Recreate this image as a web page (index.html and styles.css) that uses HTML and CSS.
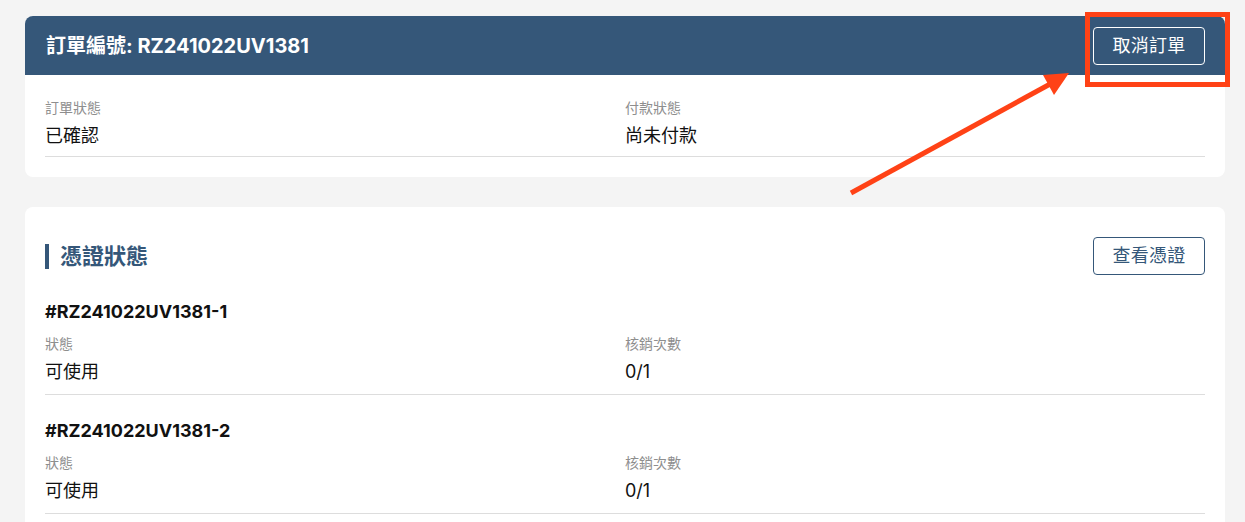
FILE: index.html
```html
<!DOCTYPE html>
<html lang="zh-Hant">
<head>
<meta charset="utf-8">
<title>訂單</title>
<link rel="stylesheet" href="styles.css">
</head>
<body>
<div class="page">
  <section class="card order-card">
    <header class="order-head">
      <h1 class="order-title">訂單編號: RZ241022UV1381</h1>
      <button class="btn btn-light">取消訂單</button>
    </header>
    <div class="order-body">
      <div class="fields">
        <div class="field">
          <div class="label">訂單狀態</div>
          <div class="value">已確認</div>
        </div>
        <div class="field">
          <div class="label">付款狀態</div>
          <div class="value">尚未付款</div>
        </div>
      </div>
    </div>
  </section>

  <section class="card voucher-card">
    <div class="section-head">
      <h2 class="section-title">憑證狀態</h2>
      <button class="btn btn-outline">查看憑證</button>
    </div>

    <div class="voucher">
      <div class="voucher-id">#RZ241022UV1381-1</div>
      <div class="fields">
        <div class="field">
          <div class="label">狀態</div>
          <div class="value">可使用</div>
        </div>
        <div class="field">
          <div class="label">核銷次數</div>
          <div class="value">0/1</div>
        </div>
      </div>
    </div>

    <div class="voucher">
      <div class="voucher-id">#RZ241022UV1381-2</div>
      <div class="fields">
        <div class="field">
          <div class="label">狀態</div>
          <div class="value">可使用</div>
        </div>
        <div class="field">
          <div class="label">核銷次數</div>
          <div class="value">0/1</div>
        </div>
      </div>
    </div>
  </section>

  <div class="highlight-box"></div>
  <svg class="arrow" width="1245" height="522" viewBox="0 0 1245 522" aria-hidden="true">
    <line x1="851" y1="193" x2="1052" y2="83" stroke="#ff4216" stroke-width="5"/>
    <polygon points="1069,73 1043,75 1054,95" fill="#ff4216"/>
  </svg>
</div>
</body>
</html>
```

FILE: styles.css
```css
* { box-sizing: border-box; }

html, body {
  margin: 0;
  padding: 0;
  background: #f4f4f4;
}

body {
  font-family: Inter, "Noto Sans CJK TC", sans-serif;
  color: #1a1a1a;
  overflow: hidden;
  height: 522px;
}

.page {
  position: relative;
  padding: 16px 0 0 25px;
}

.card {
  width: 1200px;
  background: #ffffff;
  border-radius: 8px;
  overflow: hidden;
}

.order-card {
  margin-bottom: 30px;
}

.order-head {
  height: 59px;
  background: #355779;
  display: flex;
  align-items: center;
  justify-content: space-between;
  padding: 0 20px 0 21px;
}

.order-title {
  margin: 0;
  font-size: 20px;
  font-weight: 700;
  color: #ffffff;
  line-height: 26px;
}

.btn {
  font-family: Inter, "Noto Sans CJK TC", sans-serif;
  font-size: 18px;
  line-height: 26px;
  padding: 5px 0;
  width: 112px;
  border-radius: 4px;
  background: transparent;
  cursor: pointer;
  letter-spacing: 0.3px;
}

.btn-light {
  border: 1px solid #ffffff;
  color: #ffffff;
}

.btn-outline {
  border: 1px solid #355779;
  color: #355779;
}

.order-body {
  padding: 23px 20px 20px;
}

.fields {
  display: grid;
  grid-template-columns: 1fr 1fr;
  border-bottom: 1px solid #dddddd;
  padding-bottom: 9px;
}

.order-body .fields {
  padding-bottom: 7px;
}

.label {
  font-size: 14px;
  line-height: 20px;
  color: #8e8e8e;
}

.value {
  margin-top: 5px;
  font-size: 18px;
  line-height: 26px;
  color: #111111;
}

.voucher-card {
  padding: 30px 20px 20px;
}

.section-head {
  display: flex;
  align-items: center;
  justify-content: space-between;
}

.section-title {
  margin: 0;
  font-size: 22px;
  line-height: 25px;
  font-weight: 700;
  color: #355779;
  border-left: 4px solid #355779;
  padding-left: 11px;
}

.voucher {
  margin-top: 24px;
}

.voucher + .voucher {
  margin-top: 23px;
}

.voucher-id {
  font-size: 18px;
  line-height: 26px;
  font-weight: 700;
  color: #111111;
  margin-bottom: 9px;
}

.highlight-box {
  position: absolute;
  left: 1085px;
  top: 12px;
  width: 145px;
  height: 75px;
  border: 5px solid #ff4216;
}

.arrow {
  position: absolute;
  left: 0;
  top: 0;
  pointer-events: none;
}
```
